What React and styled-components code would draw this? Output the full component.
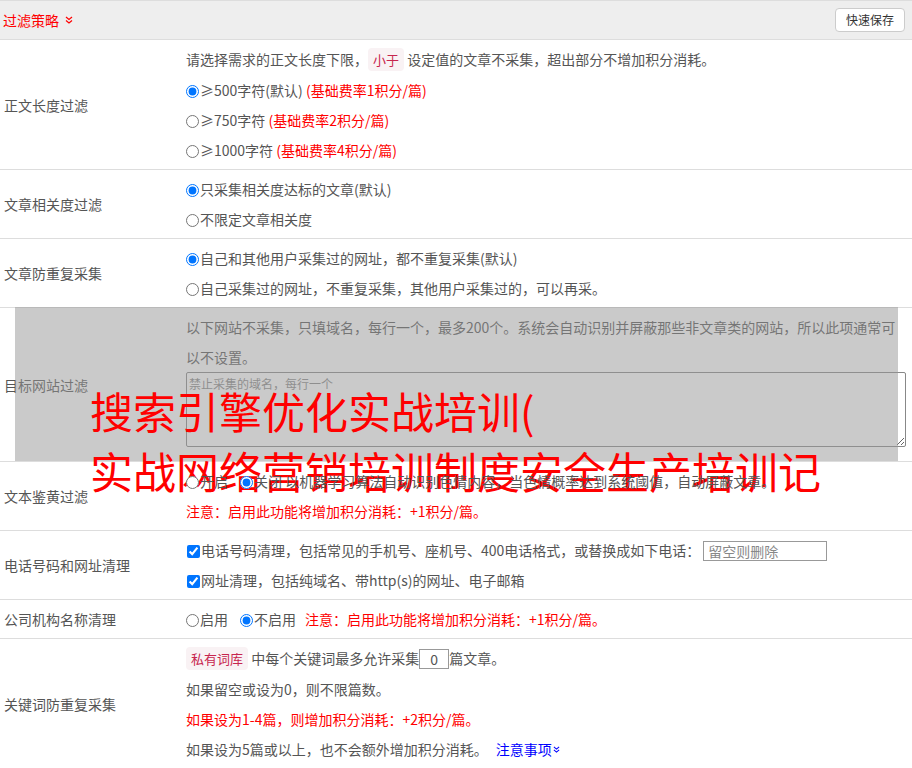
import React from 'react';
import styled, { createGlobalStyle } from 'styled-components';

const Global = createGlobalStyle`
  html, body { margin: 0; padding: 0; background: #fff; }
  body {
    font-family: "Noto Sans CJK SC", "Noto Sans", sans-serif;
    font-size: 14px;
    color: #555;
  }
  * { box-sizing: border-box; }
`;

const Page = styled.div`
  width: 912px;
  height: 768px;
  overflow: hidden;
`;

const Header = styled.div`
  display: flex;
  align-items: center;
  justify-content: space-between;
  height: 40px;
  background: #eee;
  border-top: 1px solid #ddd;
  border-bottom: 1px solid #ddd;
  padding: 0 7px 0 3px;
`;

const Title = styled.div`
  display: flex;
  align-items: center;
  gap: 6px;
  color: #f00;
  font-size: 14px;
`;

const SaveButton = styled.button`
  height: 24px;
  padding: 0 10px;
  font-family: inherit;
  font-size: 12px;
  line-height: 22px;
  color: #333;
  background: #fff;
  border: 1px solid #ccc;
  border-radius: 4px;
`;

const Row = styled.div`
  position: relative;
  display: grid;
  grid-template-columns: 186px 1fr;
  border-bottom: 1px solid #ddd;
`;

const Label = styled.div`
  display: flex;
  align-items: center;
  padding-left: 4px;
`;

const Content = styled.div`
  padding: 4px 6px 4px 0;
  min-width: 0;
`;

const Line = styled.div`
  line-height: 30px;
  min-height: 30px;
  white-space: ${(p) => (p.$wrap ? 'normal' : 'nowrap')};
`;

const Radio = styled.input.attrs({ type: 'radio' })`
  width: 13px;
  height: 13px;
  margin: 0 1px 0 0;
  vertical-align: -2px;
`;

const Check = styled.input.attrs({ type: 'checkbox' })`
  width: 13px;
  height: 13px;
  margin: 0 1px 0 1px;
  vertical-align: -2px;
`;

const Option = styled.label`
  margin-right: ${(p) => p.$gap || 0}px;
`;

const Warn = styled.span`
  color: #f00;
`;

const Code = styled.code`
  font-family: inherit;
  font-size: 13px;
  color: #c7254e;
  background: #f9f2f4;
  padding: 2px 5px;
  border-radius: 4px;
`;

const TextInput = styled.input`
  width: ${(p) => p.$w}px;
  height: 20px;
  margin-left: ${(p) => p.$ml || 0}px;
  padding: 0 4px;
  border: 1px solid #999;
  font-family: inherit;
  font-size: 14px;
  color: #555;
  text-align: ${(p) => (p.$center ? 'center' : 'left')};
  vertical-align: middle;
  position: relative;
  top: -1px;
  &::placeholder { color: #888; }
`;

const Area = styled.textarea`
  display: block;
  width: 100%;
  height: 75px;
  margin: 0 0 10px;
  padding: 3px 2px;
  border: 1px solid #888;
  border-radius: 2px;
  font-family: inherit;
  font-size: 12px;
  line-height: 16px;
  &::placeholder { color: #888; }
`;

const Link = styled.a`
  color: #00f;
  text-decoration: none;
  margin-left: 8px;
  display: inline-flex;
  align-items: center;
  gap: 1px;
`;

const AdOverlay = styled.div`
  position: absolute;
  left: 15px;
  right: 14px;
  top: -1px;
  bottom: 0;
  background: rgba(150, 150, 150, 0.5);
  pointer-events: none;
`;

const AdText = styled.div`
  position: absolute;
  left: 75px;
  top: 73px;
  font-size: 43px;
  line-height: 60px;
  color: #f00;
  white-space: nowrap;
`;

const DoubleChevron = ({ color, size = 8 }) => (
  <svg width={size} height={size} viewBox="0 0 8 8" fill="none" stroke={color} strokeWidth="1.2">
    <path d="M1 1 L4 3.5 L7 1" />
    <path d="M1 4.5 L4 7 L7 4.5" />
  </svg>
);

export default function App() {
  return (
    <Page>
      <Global />
      <Header>
        <Title>
          过滤策略
          <DoubleChevron color="#f00" />
        </Title>
        <SaveButton>快速保存</SaveButton>
      </Header>

      <Row>
        <Label>正文长度过滤</Label>
        <Content>
          <Line>
            请选择需求的正文长度下限，<Code>小于</Code> 设定值的文章不采集，超出部分不增加积分消耗。
          </Line>
          <Line>
            <Option><Radio name="len" defaultChecked />≥500字符(默认)</Option> <Warn>(基础费率1积分/篇)</Warn>
          </Line>
          <Line>
            <Option><Radio name="len" />≥750字符</Option> <Warn>(基础费率2积分/篇)</Warn>
          </Line>
          <Line>
            <Option><Radio name="len" />≥1000字符</Option> <Warn>(基础费率4积分/篇)</Warn>
          </Line>
        </Content>
      </Row>

      <Row>
        <Label>文章相关度过滤</Label>
        <Content>
          <Line><Option><Radio name="rel" defaultChecked />只采集相关度达标的文章(默认)</Option></Line>
          <Line><Option><Radio name="rel" />不限定文章相关度</Option></Line>
        </Content>
      </Row>

      <Row>
        <Label>文章防重复采集</Label>
        <Content>
          <Line><Option><Radio name="dup" defaultChecked />自己和其他用户采集过的网址，都不重复采集(默认)</Option></Line>
          <Line><Option><Radio name="dup" />自己采集过的网址，不重复采集，其他用户采集过的，可以再采。</Option></Line>
        </Content>
      </Row>

      <Row>
        <Label>目标网站过滤</Label>
        <Content>
          <Line $wrap>
            以下网站不采集，只填域名，每行一个，最多200个。系统会自动识别并屏蔽那些非文章类的网站，所以此项通常可以不设置。
          </Line>
          <Area placeholder="禁止采集的域名，每行一个" />
        </Content>
        <AdOverlay>
          <AdText>
            <div>搜索引擎优化实战培训(</div>
            <div>实战网络营销培训制度安全生产培训记</div>
          </AdText>
        </AdOverlay>
      </Row>

      <Row>
        <Label>文本鉴黄过滤</Label>
        <Content>
          <Line>
            <Option $gap={12}><Radio name="porn" />开启</Option>
            <Option><Radio name="porn" defaultChecked />关闭</Option> 以机器学习算法自动识别色情内容，当色情概率达到系统阈值，自动屏蔽文章。
          </Line>
          <Line><Warn>注意：启用此功能将增加积分消耗：+1积分/篇。</Warn></Line>
        </Content>
      </Row>

      <Row>
        <Label>电话号码和网址清理</Label>
        <Content>
          <Line>
            <Option><Check defaultChecked />电话号码清理，包括常见的手机号、座机号、400电话格式，或替换成如下电话：</Option>
            <TextInput $w={124} $ml={3} placeholder="留空则删除" />
          </Line>
          <Line><Option><Check defaultChecked />网址清理，包括纯域名、带http(s)的网址、电子邮箱</Option></Line>
        </Content>
      </Row>

      <Row>
        <Label>公司机构名称清理</Label>
        <Content>
          <Line>
            <Option $gap={12}><Radio name="org" />启用</Option>
            <Option $gap={9}><Radio name="org" defaultChecked />不启用</Option>
            <Warn>注意：启用此功能将增加积分消耗：+1积分/篇。</Warn>
          </Line>
        </Content>
      </Row>

      <Row>
        <Label>关键词防重复采集</Label>
        <Content>
          <Line>
            <Code>私有词库</Code> 中每个关键词最多允许采集<TextInput $w={30} $center defaultValue="0" />篇文章。
          </Line>
          <Line>如果留空或设为0，则不限篇数。</Line>
          <Line><Warn>如果设为1-4篇，则增加积分消耗：+2积分/篇。</Warn></Line>
          <Line>
            如果设为5篇或以上，也不会额外增加积分消耗。
            <Link href="#">注意事项<DoubleChevron color="#00f" size={7} /></Link>
          </Line>
        </Content>
      </Row>
    </Page>
  );
}
